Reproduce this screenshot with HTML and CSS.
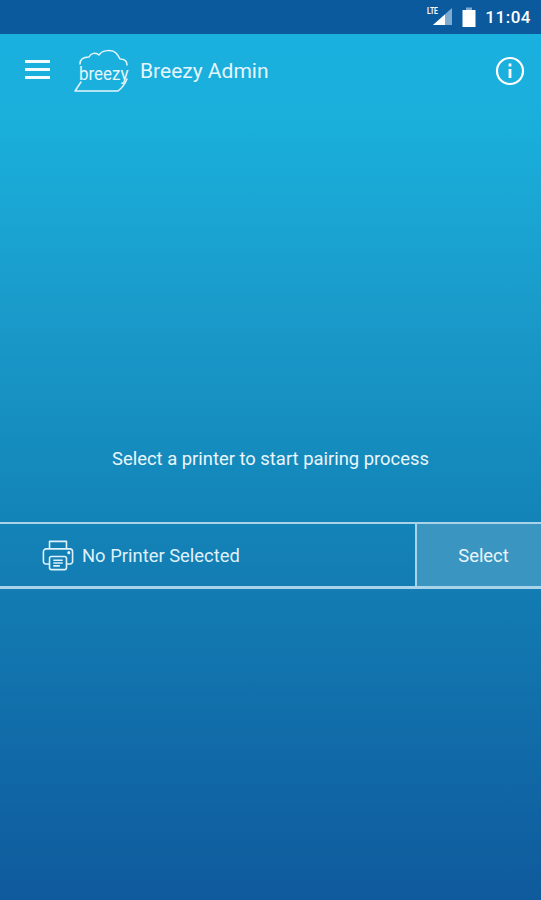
FILE: index.html
```html
<!DOCTYPE html>
<html lang="en">
<head>
    <meta charset="UTF-8">
    <meta name="viewport" content="width=device-width, initial-scale=1.0">
    <title>Breezy Admin</title>
    <link rel="stylesheet" href="styles.css">
</head>

<body>
    <div class="status-bar">
        <span class="lte-wrap">
            <svg class="signal" width="24" height="20" viewBox="0 0 24 20">
                <polygon points="23,1 23,18 4,18" fill="#7fabd0"/>
                <polygon points="16,7.500 16,18 4,18" fill="#ffffff"/>
            </svg>
            <span class="lte">LTE</span>
        </span>
        <svg class="battery" width="14" height="20" viewBox="0 0 14 20">
            <path d="M4 0.500h6v2.500H4z" fill="#7fabd0"/>
            <path d="M0.500 3h13v17H0.500z" fill="#ffffff"/>
        </svg>
        <span class="clock">11:04</span>
    </div>

    <header class="app-bar">
        <div class="menu-icon"><span></span><span></span><span></span></div>
        <div class="logo">
            <svg width="56" height="46" viewBox="0 0 56 46" fill="none" stroke="#e6f6fc" stroke-width="1.500" stroke-linecap="round" stroke-linejoin="round">
                <path d="M6 16C6 12 9 9 15 9C17 5 22 4 25 7C28 2 38 1 42 5C44 7 45 9 46 11C50 11 53 13 53 17"/>
                <path d="M53 31C51 36 48 40 44 43L1 43L7 34"/>
            </svg>
            <span class="logo-text">breezy</span>
        </div>
        <h1 class="title">Breezy Admin</h1>
        <svg class="info-icon" width="30" height="30" viewBox="0 0 30 30" fill="none" stroke="#ffffff">
            <circle cx="15" cy="15" r="13" stroke-width="2.200"/>
            <path d="M15 13v9" stroke-width="2.800"/>
            <path d="M15 7.500v3" stroke-width="2.800"/>
        </svg>
    </header>

    <main class="content">
        <p class="prompt">Select a printer to start pairing process</p>
        <div class="printer-row">
            <div class="printer-info">
                <svg width="32" height="33" viewBox="0 0 34 34" fill="none" stroke="#dff1fa" stroke-width="1.700" stroke-linejoin="round">
                    <path d="M8 10V2h18v8"/>
                    <path d="M8 26H4a2.500 2.500 0 0 1-2.500-2.500V13A3 3 0 0 1 4.500 10h25a3 3 0 0 1 3 3v10.500A2.500 2.500 0 0 1 30 26h-4"/>
                    <rect x="8" y="18" width="18" height="14" rx="2"/>
                    <path d="M12 22h10M12 25h10M12 28h7"/>
                    <circle cx="28.500" cy="14" r="0.800"/>
                </svg>
                <span>No Printer Selected</span>
            </div>
            <button class="select-button">Select</button>
        </div>
    </main>
</body>
</html>
```

FILE: styles.css
```css
html, body {
    height: 100%;
}

body {
    margin: 0;
    padding: 0;
    font-family: Roboto, "Liberation Sans", sans-serif;
    color: white;
    background: linear-gradient(to bottom, #1ab0df 34px, #1aafdb 120px, #1a9ccb 300px, #1488bb 480px, #0f5a9c 900px);
    overflow: hidden;
}

/* Status bar */
.status-bar {
    height: 34px;
    background: #0b5a9e;
    display: flex;
    align-items: center;
    justify-content: flex-end;
    padding-right: 10px;
    box-sizing: border-box;
}

.lte-wrap {
    position: relative;
    width: 24px;
    height: 20px;
    margin-right: 9px;
}

.lte {
    position: absolute;
    top: 0;
    left: -2px;
    font-size: 9px;
    font-weight: 700;
    line-height: 9px;
    transform: scaleX(0.75);
    transform-origin: left;
}

.signal {
    display: block;
}

.battery {
    margin-right: 9px;
}

.clock {
    font-size: 17px;
    font-weight: 500;
    letter-spacing: 0.5px;
}

/* App bar */
.app-bar {
    display: flex;
    align-items: center;
    height: 74px;
    padding: 0 16px 0 25px;
}

.menu-icon {
    display: flex;
    flex-direction: column;
    gap: 5px;
    width: 25px;
    margin: -3px 24px 0 0;
}

.menu-icon span {
    height: 3px;
    background: #f2fbfe;
}

.logo {
    position: relative;
    width: 56px;
    height: 46px;
    margin-right: 10px;
}

.logo svg {
    display: block;
}

.logo-text {
    position: absolute;
    left: 5px;
    top: 15px;
    font-size: 18px;
    line-height: 22px;
    color: #e6f6fc;
    transform: scaleX(0.94);
    transform-origin: left;
}

.title {
    flex: 1;
    margin: 0;
    font-size: 21px;
    font-weight: 400;
    color: #e6f6fc;
}

/* Printer area */
.content {
    display: flex;
    flex-direction: column;
    align-items: stretch;
    padding-top: 339px;
}

.prompt {
    margin: 0 0 51px;
    text-align: center;
    font-size: 18.4px;
    line-height: 24px;
    color: #eaf6fb;
}

.printer-row {
    display: flex;
    height: 67px;
    padding-top: 1px;
    box-sizing: border-box;
    border-top: 2px solid #a9d3e8;
    border-bottom: 3px solid #a9d3e8;
}

.printer-info {
    flex: 1;
    display: flex;
    align-items: center;
    gap: 8px;
    padding-left: 42px;
    font-size: 18.4px;
    color: #dff1fa;
}

.select-button {
    width: 126px;
    margin-top: -1px;
    border: 0;
    border-left: 2px solid #a9d3e8;
    background: #3b95c1;
    color: #eaf6fb;
    font-family: inherit;
    font-size: 18.4px;
    padding: 1px 0 0 9px;
}
```
